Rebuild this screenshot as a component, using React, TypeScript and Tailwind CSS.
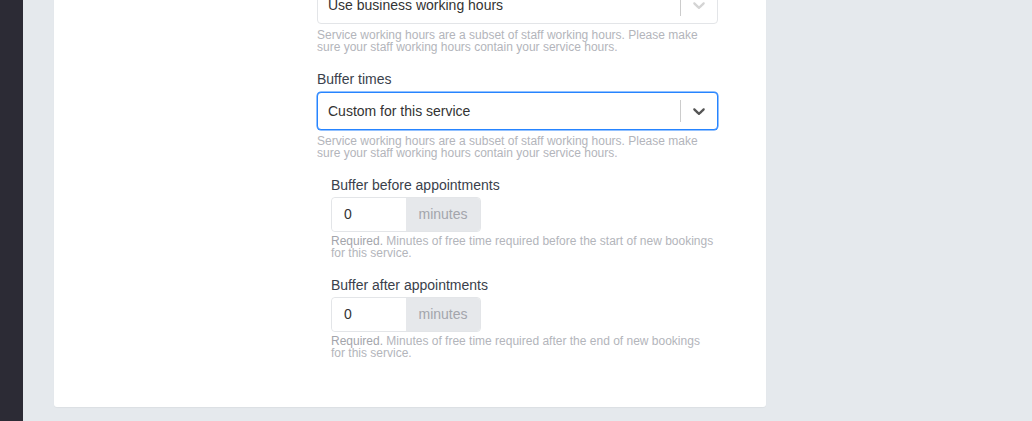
import { ReactNode } from 'react';

const Chevron = ({ className }: { className: string }) => (
  <svg width="20" height="20" viewBox="0 0 20 20" className={className} fill="currentColor">
    <path d="M4.516 7.548c0.436-0.446 1.043-0.481 1.576 0l3.908 3.747 3.908-3.747c0.533-0.481 1.141-0.446 1.574 0 0.436 0.445 0.408 1.197 0 1.615-0.406 0.418-4.695 4.502-4.695 4.502-0.217 0.223-0.502 0.335-0.787 0.335s-0.57-0.112-0.789-0.335c0 0-4.287-4.084-4.695-4.502s-0.436-1.17 0-1.615z" />
  </svg>
);

const Help = ({ children, tight }: { children: ReactNode; tight?: boolean }) => (
  <p className={`${tight ? 'mt-[3px]' : 'mt-[5px]'} text-[12px] leading-[12px] text-[#b3b5bb]`}>{children}</p>
);

const Select = ({ value, focused }: { value: string; focused?: boolean }) => (
  <div
    className={`flex h-[38px] items-center rounded-[4px] border bg-white ${
      focused ? 'border-[#2684ff] shadow-[0_0_0_0.5px_#2684ff]' : 'border-[#e3e5e8]'
    }`}
  >
    <span className="flex-1 pl-[10px] text-[14px] text-[#333]">{value}</span>
    <span className="h-[22px] w-px bg-[#cccccc]" />
    <span className="flex w-[36px] justify-center">
      <Chevron className={focused ? 'text-[#555]' : 'text-[#d4d4d4]'} />
    </span>
  </div>
);

const MinutesInput = () => (
  <div className="flex h-[35px] w-[150px] rounded-[4px] border border-[#e3e5e8]">
    <div className="flex w-[74px] items-center rounded-l-[4px] bg-white pl-[12px] text-[14px] text-[#333]">0</div>
    <div className="flex flex-1 items-center justify-center rounded-r-[3px] bg-[#e6e8eb] text-[14px] text-[#a3a5ab]">minutes</div>
  </div>
);

export default function App() {
  return (
    <div className="flex h-[421px] overflow-hidden bg-[#e5e9ed]" style={{ fontFamily: '"Liberation Sans", Arial, sans-serif' }}>
      <div className="w-[23px] shrink-0 bg-[#2c2b35]" />
      <div className="pl-[31px]">
        <div className="-mt-[14px] h-[421px] w-[712px] rounded-b-[3px] bg-white pl-[263px] shadow-[0_1px_1px_rgba(0,0,0,0.04)]">
          <div className="w-[401px]">
            <Select value="Use business working hours" />
            <Help>
              Service working hours are a subset of staff working hours. Please make sure your staff working hours contain your service hours.
            </Help>

            <div className="mt-[18px] mb-[5px] text-[14px] leading-[16px] text-[#3a3f4b]">Buffer times</div>
            <Select value="Custom for this service" focused />
            <Help>
              Service working hours are a subset of staff working hours. Please make sure your staff working hours contain your service hours.
            </Help>

            <div className="pl-[14px] pr-[2px]">
              <div className="mt-[18px] mb-[4px] text-[14px] leading-[16px] text-[#3a3f4b]">Buffer before appointments</div>
              <MinutesInput />
              <Help tight>
                <span className="text-[#a3a5ab]">Required.</span> Minutes of free time required before the start of new bookings for this service.
              </Help>

              <div className="mt-[18px] mb-[4px] text-[14px] leading-[16px] text-[#3a3f4b]">Buffer after appointments</div>
              <MinutesInput />
              <Help tight>
                <span className="text-[#a3a5ab]">Required.</span> Minutes of free time required after the end of new bookings for this service.
              </Help>
            </div>
          </div>
        </div>
      </div>
    </div>
  );
}
